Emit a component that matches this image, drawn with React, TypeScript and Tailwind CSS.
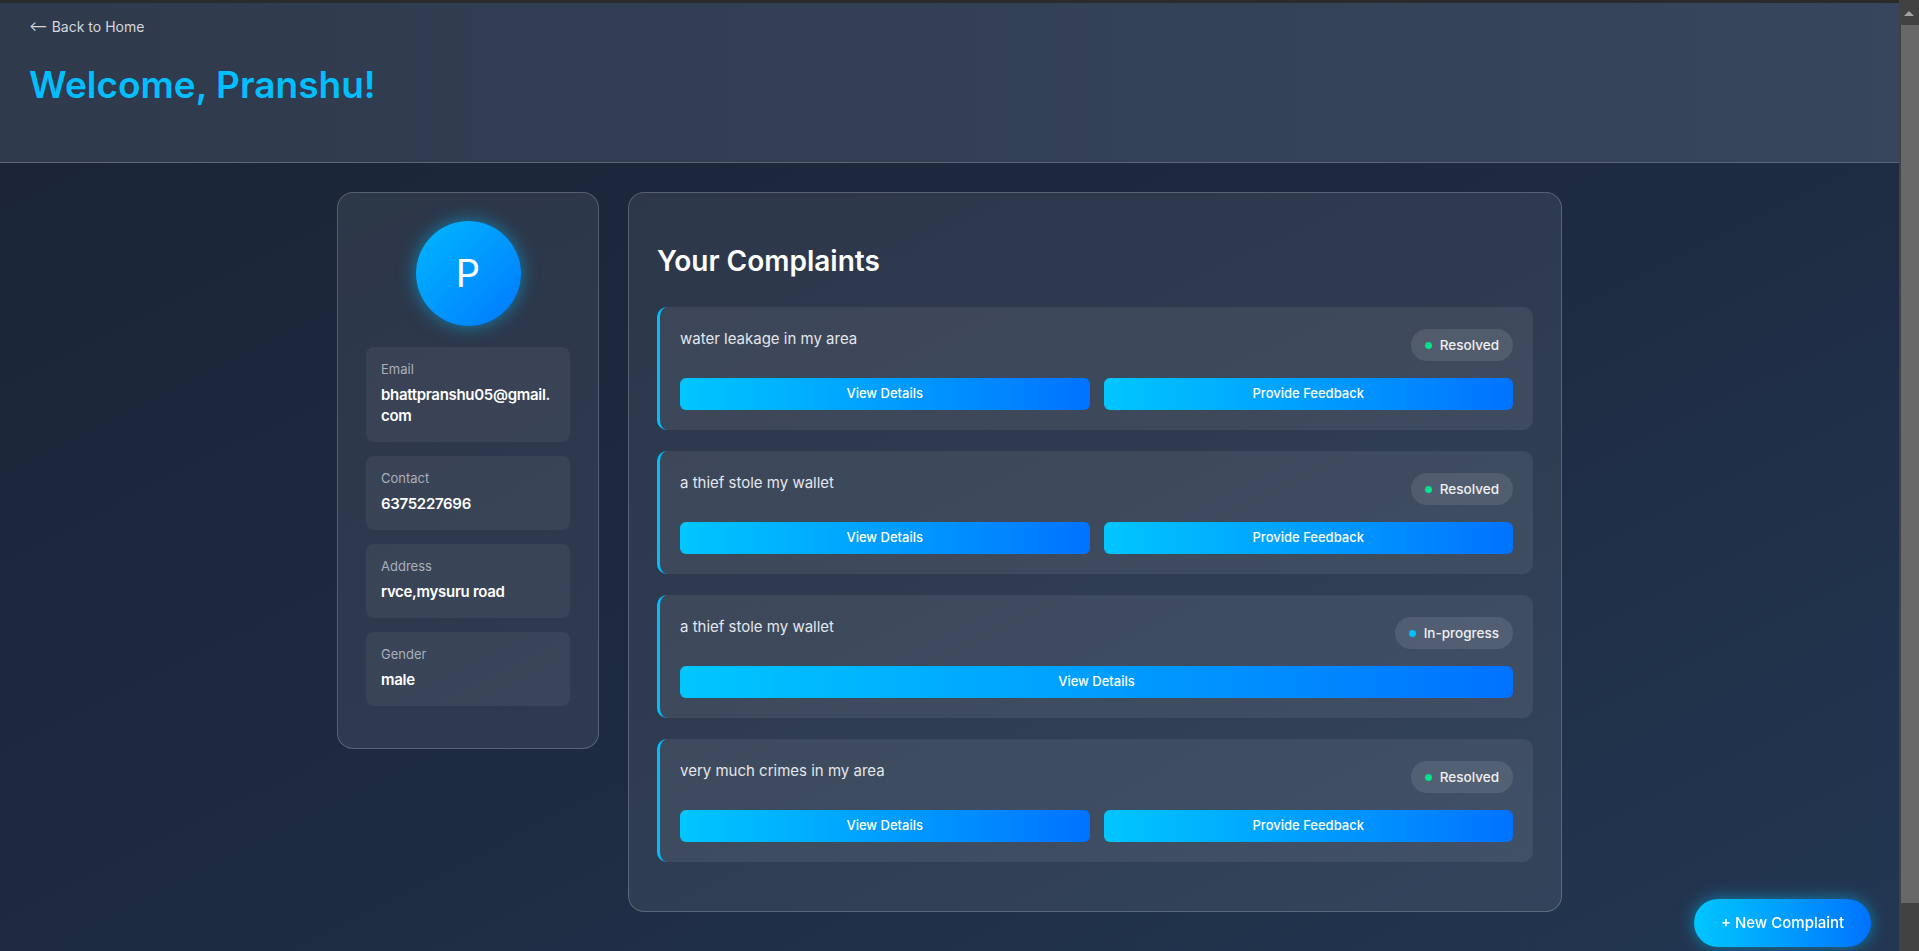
import React from 'react';

type Complaint = { id: number; title: string; status: 'Resolved' | 'In-progress' };

const COMPLAINTS: Complaint[] = [
  { id: 1, title: 'water leakage in my area', status: 'Resolved' },
  { id: 2, title: 'a thief stole my wallet', status: 'Resolved' },
  { id: 3, title: 'a thief stole my wallet', status: 'In-progress' },
  { id: 4, title: 'very much crimes in my area', status: 'Resolved' },
];

const btn =
  'h-8 flex-1 rounded-md bg-gradient-to-r from-[#00c6ff] to-[#0072ff] text-[13px] font-medium text-white cursor-pointer';

function InfoBox({ label, children }: { label: string; children: React.ReactNode }) {
  return (
    <div className="mb-[14px] rounded-lg bg-white/[0.06] px-[15px] pt-[15px] pb-[16px]">
      <p className="mb-[7px] text-[13px] leading-[15px] text-[#a9b0bb]">{label}</p>
      <p className="text-[15px] font-semibold leading-[21px] tracking-[-0.3px] text-white break-words">{children}</p>
    </div>
  );
}

function ComplaintCard({ c }: { c: Complaint }) {
  const resolved = c.status === 'Resolved';
  return (
    <div className="mb-[21px] rounded-[10px] border-l-[3px] border-[#00bfff] bg-white/[0.07] px-5 pt-5 pb-5">
      <div className="mb-[17px] flex items-start justify-between">
        <h3 className="text-[15px] leading-6 text-[#e3e6eb]">{c.title}</h3>
        <span className="mt-[2px] flex h-8 items-center gap-2 rounded-full bg-white/10 px-[14px] text-[13.5px] font-medium text-[#eef0f3]">
          <span className={`h-[7px] w-[7px] rounded-full ${resolved ? 'bg-[#00e38a]' : 'bg-[#00bfff]'}`} />
          {c.status}
        </span>
      </div>
      <div className="flex gap-[14px]">
        <button className={btn}>View Details</button>
        {resolved && <button className={btn}>Provide Feedback</button>}
      </div>
    </div>
  );
}

// browser scrollbar as seen in the screenshot
function Scrollbar() {
  return (
    <div className="flex w-[20px] shrink-0 flex-col bg-[#424242]">
      <div className="flex h-[25px] justify-center pt-[11px]">
        <div className="h-0 w-0 border-x-[5px] border-b-[5px] border-x-transparent border-b-[#a3a3a3]" />
      </div>
      <div className="ml-[2px] h-[878px] bg-[#686868]" />
    </div>
  );
}

export default function App() {
  return (
    <div className="flex h-[951px] overflow-hidden bg-[#1b2538] font-['Inter',sans-serif]">
      <div className="min-w-0 flex-1 overflow-hidden border-t-[3px] border-[#2b2b2b] bg-gradient-to-br from-[#1a2435] via-[#1d2a40] to-[#233752]">
        <header className="h-[160px] border-b border-[#5d6778] bg-gradient-to-r from-[#2f3a4c] to-[#37465c] px-[29px] pt-[14px]">
          <a className="block text-[14px] leading-5 text-[#d4d8de]">⟵ Back to Home</a>
          <h1 className="mt-[26px] text-[37px] font-semibold leading-[44px] text-[#00bfff]">Welcome, Pranshu!</h1>
        </header>

        <main className="flex items-start justify-center gap-[29px] pt-[29px] pb-[80px]">
          <aside className="w-[262px] rounded-2xl border border-white/20 bg-white/[0.08] px-7 pt-7 pb-7">
            <div className="mb-[21px] flex justify-center">
              <div className="flex h-[105px] w-[105px] items-center justify-center rounded-full bg-gradient-to-br from-[#00b8ff] to-[#0077ff] text-[38px] font-normal text-white shadow-[0_0_18px_rgba(0,191,255,0.55)]">
                P
              </div>
            </div>
            <InfoBox label="Email">
              bhattpranshu05@gmail.<wbr />com
            </InfoBox>
            <InfoBox label="Contact">6375227696</InfoBox>
            <InfoBox label="Address">rvce,mysuru road</InfoBox>
            <InfoBox label="Gender">male</InfoBox>
          </aside>

          <section className="w-[934px] rounded-2xl border border-white/20 bg-white/[0.08] px-7 pt-7 pb-7">
            <h2 className="mt-[22px] mb-7 text-[28px] font-semibold leading-9 text-white">Your Complaints</h2>
            {COMPLAINTS.map((c) => (
              <ComplaintCard key={c.id} c={c} />
            ))}
          </section>
        </main>

        <button className="fixed right-[48px] bottom-[4px] h-12 w-[177px] rounded-full bg-gradient-to-r from-[#00c6ff] to-[#0072ff] text-[15px] font-medium text-white shadow-[0_0_16px_rgba(0,191,255,0.55)] cursor-pointer">
          + New Complaint
        </button>
      </div>
      <Scrollbar />
    </div>
  );
}
